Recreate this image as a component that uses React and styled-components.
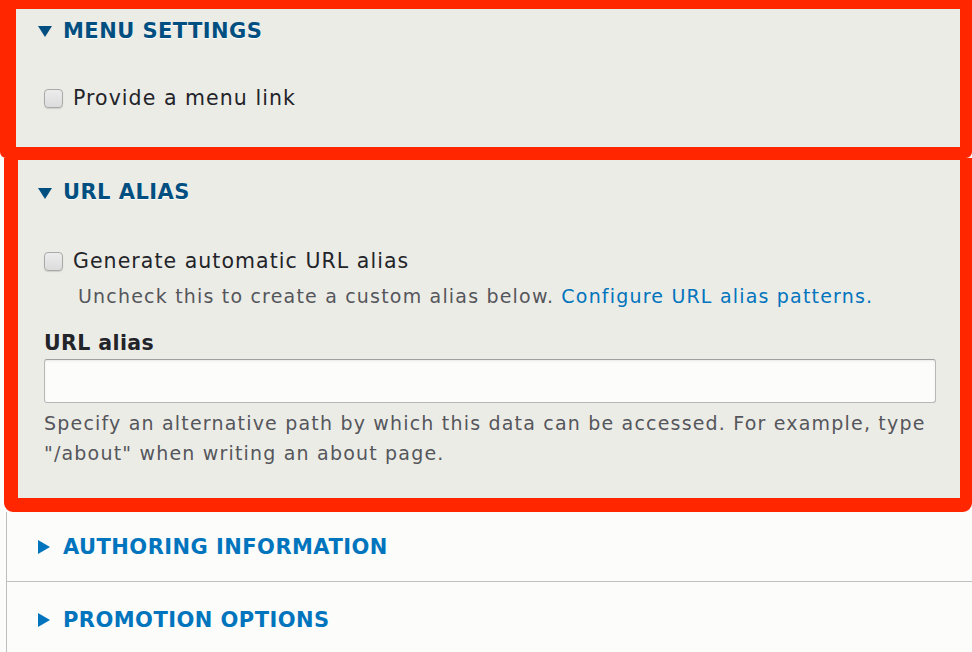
import React from "react";
import styled, { createGlobalStyle } from "styled-components";

const GlobalStyle = createGlobalStyle`
  html, body { margin: 0; padding: 0; }
  body {
    background: #fcfcfa;
    font-family: "DejaVu Sans", "Liberation Sans", sans-serif;
    color: #232429;
    overflow: hidden;
  }
`;

const Page = styled.div`
  width: 972px;
  height: 652px;
  overflow: hidden;
  display: flex;
  flex-direction: column;
`;

const Highlight = styled.section`
  box-sizing: border-box;
  width: ${(p) => p.$width}px;
  margin-left: ${(p) => p.$left}px;
  background: #ecece7;
  border-style: solid;
  border-color: #ff2600;
  border-width: ${(p) => p.$borders};
  border-radius: ${(p) => p.$radius};
  padding-bottom: ${(p) => p.$padBottom}px;
`;

const Summary = styled.div`
  display: flex;
  align-items: center;
  height: ${(p) => p.$height}px;
  padding-left: ${(p) => p.$indent}px;
  gap: 11px;
  font-weight: bold;
  font-size: 21px;
  letter-spacing: 0.45px;
  text-transform: uppercase;
  color: ${(p) => (p.$open ? "#004f80" : "#0074bd")};
  text-shadow: ${(p) => (p.$open ? "0 1px 0 #ffffff" : "none")};
`;

const DownArrow = styled.span`
  width: 0;
  height: 0;
  border-left: 7px solid transparent;
  border-right: 7px solid transparent;
  border-top: 11px solid #004f80;
  margin-top: 2px;
`;

const RightArrow = styled.span`
  width: 0;
  height: 0;
  border-top: 7px solid transparent;
  border-bottom: 7px solid transparent;
  border-left: 12px solid #0074bd;
  margin-right: 2px;
`;

const Body = styled.div`
  padding-left: ${(p) => p.$indent}px;
  padding-right: 20px;
  display: flex;
  flex-direction: column;
`;

const CheckRow = styled.label`
  display: flex;
  align-items: center;
  gap: 10px;
  height: 20px;
  margin-top: ${(p) => p.$top}px;
  font-size: 20.5px;
  letter-spacing: 1.05px;
  color: #232429;
  white-space: nowrap;
`;

const CheckBox = styled.span`
  box-sizing: border-box;
  width: 19px;
  height: 19px;
  border: 1px solid #a9a9a9;
  border-radius: 4px;
  background: linear-gradient(#ececec, #dcdcdc);
  box-shadow: 0 1px 1px rgba(0, 0, 0, 0.12);
  flex: none;
`;

const Description = styled.div`
  font-size: 19px;
  letter-spacing: 1.19px;
  line-height: ${(p) => p.$lh}px;
  color: #55565b;
  padding-left: ${(p) => p.$indent || 0}px;
  margin-top: ${(p) => p.$top || 0}px;
  white-space: nowrap;
`;

const Link = styled.a`
  color: #0074bd;
  text-decoration: none;
`;

const FieldLabel = styled.div`
  font-weight: bold;
  font-size: 20.5px;
  letter-spacing: 0.4px;
  line-height: 24px;
  margin-top: 23px;
  color: #232429;
`;

const TextInput = styled.div`
  box-sizing: border-box;
  margin-top: 4px;
  width: 892px;
  height: 44px;
  border: 1px solid #b8b8b8;
  border-top-color: #a0a0a0;
  border-radius: 3px;
  background: #fcfcfa;
  box-shadow: inset 0 1px 2px rgba(0, 0, 0, 0.08);
`;

const Rest = styled.div`
  margin-left: 6px;
  border-left: 1px solid #bfbfbf;
  display: flex;
  flex-direction: column;
  flex: 1;
`;

const Details = styled.div`
  border-bottom: ${(p) => (p.$last ? "none" : "1px solid #c0c0c0")};
`;

export default function App() {
  return (
    <Page>
      <GlobalStyle />
      <Highlight $width={972} $left={0} $borders="9px 12px 11px 16px" $radius="0 0 6px 6px" $padBottom={39}>
        <Summary $open $height={43} $indent={22}>
          <DownArrow />
          <span>Menu settings</span>
        </Summary>
        <Body $indent={28}>
          <CheckRow $top={36}>
            <CheckBox />
            <span>Provide a menu link</span>
          </CheckRow>
        </Body>
      </Highlight>
      <Highlight $width={968} $left={4} $borders="2px 12px 14px 14px" $radius="0 0 9px 9px" $padBottom={30}>
        <Summary $open $height={64} $indent={20}>
          <DownArrow />
          <span>URL alias</span>
        </Summary>
        <Body $indent={26}>
          <CheckRow $top={27}>
            <CheckBox />
            <span>Generate automatic URL alias</span>
          </CheckRow>
          <Description $lh={24} $indent={34} $top={13}>
            Uncheck this to create a custom alias below.{" "}
            <Link href="#">Configure URL alias patterns.</Link>
          </Description>
          <FieldLabel>URL alias</FieldLabel>
          <TextInput />
          <Description $lh={30} $top={5}>
            Specify an alternative path by which this data can be accessed. For example, type
            <br />
            "/about" when writing an about page.
          </Description>
        </Body>
      </Highlight>
      <Rest>
        <Details>
          <Summary $height={69} $indent={31}>
            <RightArrow />
            <span>Authoring information</span>
          </Summary>
        </Details>
        <Details $last>
          <Summary $height={76} $indent={31}>
            <RightArrow />
            <span>Promotion options</span>
          </Summary>
        </Details>
      </Rest>
    </Page>
  );
}
